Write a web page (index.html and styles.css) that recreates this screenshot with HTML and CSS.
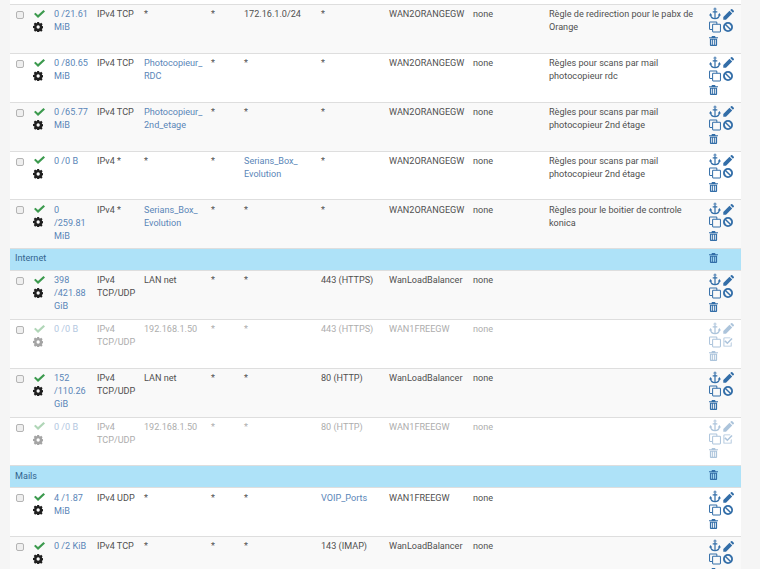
FILE: index.html
```html
<!DOCTYPE html>
<html lang="fr">
<head>
<meta charset="utf-8">
<title>Rules</title>
<link rel="stylesheet" href="styles.css">
</head>
<body>
<svg class="defs" width="0" height="0" aria-hidden="true">
<symbol id="i-check" viewBox="0 0 11 8"><path d="M0 4.100 1.500 2.700 4 5 9.500 0 11 1.400 4 8Z"/></symbol>
<symbol id="i-cog" viewBox="0 0 12 12"><path fill-rule="evenodd" d="M4.900 0h2.200l.3 1.600 1 .4 1.300-.9 1.600 1.600-.9 1.300.4 1 1.600.3v2.200l-1.600.3-.4 1 .9 1.300-1.600 1.600-1.300-.9-1 .4-.3 1.600H4.900l-.3-1.600-1-.4-1.300.9L.7 9.800l.9-1.300-.4-1L-.4 7.200V5l1.600-.3.400-1-.9-1.300L2.300.8l1.300.9 1-.4ZM6 4.100a2 2 0 1 0 0 4 2 2 0 0 0 0-4Z" transform="translate(.2 -.1)"/></symbol>
<symbol id="i-anchor" viewBox="0 0 13 13"><g fill="none" stroke="currentColor"><circle cx="6.500" cy="1.700" r="1.100" stroke-width="1"/><path d="M6.500 3V12.300M4 4.800H9" stroke-width="1.300"/><path d="M1.700 8C2 10.800 4 12 6.500 12S11 10.800 11.300 8" stroke-width="1.300"/></g><path d="M0 8.800 1.700 6 3.500 8.800ZM9.500 8.800 11.300 6 13 8.800Z"/></symbol>
<symbol id="i-pencil" viewBox="0 0 11 11"><path d="M0.300 8 6.500 1.800 9.200 4.500 3 10.700H0.300ZM7.200 1.100 8.200.200a.8.8 0 0 1 1.100 0L10.800 1.700a.8.800 0 0 1 0 1.100L9.900 3.800Z"/></symbol>
<symbol id="i-copy" viewBox="0 0 13 12"><g fill="none" stroke="currentColor" stroke-width="1.100"><path d="M8.500 3V1.100A.6.6 0 0 0 7.900.6H1.200A.6.6 0 0 0 .6 1.100V8A.6.6 0 0 0 1.200 8.600H3.500"/><rect x="3.900" y="3.100" width="8.500" height="8.300" rx=".7"/></g></symbol>
<symbol id="i-ban" viewBox="0 0 11 11"><path fill-rule="evenodd" d="M5.500 0a5.500 5.500 0 1 1 0 11 5.500 5.500 0 0 1 0-11ZM2.400 3.500A3.800 3.800 0 0 0 7.500 8.600ZM3.500 2.400 8.600 7.500A3.800 3.800 0 0 0 3.500 2.400Z"/></symbol>
<symbol id="i-trash" viewBox="0 0 10 11"><path fill-rule="evenodd" d="M3.300 0H6.700L7.300 1.300H10V2.400H0V1.300H2.700ZM1 3H9V10A1 1 0 0 1 8 11H2A1 1 0 0 1 1 10ZM2.500 4.200V9.800H3.500V4.200ZM4.500 4.200V9.800H5.500V4.200ZM6.500 4.200V9.800H7.500V4.200Z"/></symbol>
<symbol id="i-checksq" viewBox="0 0 11 11"><path fill-rule="evenodd" d="M1.500 0.500H8V1.500H1.500V9.500H8.500V6.500L9.500 5.500V10.500H.5V1.500A1 1 0 0 1 1.500 .5ZM2.800 3.700 4.800 5.700 9.300 1 10.500 2.200 4.800 8 1.600 4.900Z"/></symbol>
</svg>
<div class="panel">
<table class="rules">
<colgroup>
<col class="c-box"><col class="c-st"><col class="c-states"><col class="c-proto"><col class="c-src"><col class="c-sport"><col class="c-dst"><col class="c-dport"><col class="c-gw"><col class="c-q"><col class="c-sched"><col class="c-desc"><col class="c-act">
</colgroup>
<tbody>
<tr class="alt">
<td><span class="box"></span></td><td><svg class="ic check"><use href="#i-check"/></svg><svg class="ic cog"><use href="#i-cog"/></svg></td>
<td><a>0 /21.61 MiB</a></td><td>IPv4 TCP</td><td>*</td><td>*</td><td>172.16.1.0/24</td><td>*</td><td>WAN2ORANGEGW</td><td>none</td><td></td><td>Règle de redirection pour le pabx de Orange</td>
<td class="acts"><div class="tools"><svg class="ic anchor"><use href="#i-anchor"/></svg><svg class="ic pencil"><use href="#i-pencil"/></svg><svg class="ic copy"><use href="#i-copy"/></svg><svg class="ic ban"><use href="#i-ban"/></svg><svg class="ic trash"><use href="#i-trash"/></svg></div></td>
</tr>
<tr>
<td><span class="box"></span></td><td><svg class="ic check"><use href="#i-check"/></svg><svg class="ic cog"><use href="#i-cog"/></svg></td>
<td><a>0 /80.65 MiB</a></td><td>IPv4 TCP</td><td><a>Photocopieur_<br>RDC</a></td><td>*</td><td>*</td><td>*</td><td>WAN2ORANGEGW</td><td>none</td><td></td><td>Règles pour scans par mail photocopieur rdc</td>
<td class="acts"><div class="tools"><svg class="ic anchor"><use href="#i-anchor"/></svg><svg class="ic pencil"><use href="#i-pencil"/></svg><svg class="ic copy"><use href="#i-copy"/></svg><svg class="ic ban"><use href="#i-ban"/></svg><svg class="ic trash"><use href="#i-trash"/></svg></div></td>
</tr>
<tr class="alt">
<td><span class="box"></span></td><td><svg class="ic check"><use href="#i-check"/></svg><svg class="ic cog"><use href="#i-cog"/></svg></td>
<td><a>0 /65.77 MiB</a></td><td>IPv4 TCP</td><td><a>Photocopieur_<br>2nd_etage</a></td><td>*</td><td>*</td><td>*</td><td>WAN2ORANGEGW</td><td>none</td><td></td><td>Règles pour scans par mail photocopieur 2nd étage</td>
<td class="acts"><div class="tools"><svg class="ic anchor"><use href="#i-anchor"/></svg><svg class="ic pencil"><use href="#i-pencil"/></svg><svg class="ic copy"><use href="#i-copy"/></svg><svg class="ic ban"><use href="#i-ban"/></svg><svg class="ic trash"><use href="#i-trash"/></svg></div></td>
</tr>
<tr>
<td><span class="box"></span></td><td><svg class="ic check"><use href="#i-check"/></svg><svg class="ic cog"><use href="#i-cog"/></svg></td>
<td><a>0 /0 B</a></td><td>IPv4 *</td><td>*</td><td>*</td><td><a>Serians_Box_<br>Evolution</a></td><td>*</td><td>WAN2ORANGEGW</td><td>none</td><td></td><td>Règles pour scans par mail photocopieur 2nd étage</td>
<td class="acts"><div class="tools"><svg class="ic anchor"><use href="#i-anchor"/></svg><svg class="ic pencil"><use href="#i-pencil"/></svg><svg class="ic copy"><use href="#i-copy"/></svg><svg class="ic ban"><use href="#i-ban"/></svg><svg class="ic trash"><use href="#i-trash"/></svg></div></td>
</tr>
<tr class="alt">
<td><span class="box"></span></td><td><svg class="ic check"><use href="#i-check"/></svg><svg class="ic cog"><use href="#i-cog"/></svg></td>
<td><a>0<br>/259.81<br>MiB</a></td><td>IPv4 *</td><td><a>Serians_Box_<br>Evolution</a></td><td>*</td><td>*</td><td>*</td><td>WAN2ORANGEGW</td><td>none</td><td></td><td>Règles pour le boitier de controle konica</td>
<td class="acts"><div class="tools"><svg class="ic anchor"><use href="#i-anchor"/></svg><svg class="ic pencil"><use href="#i-pencil"/></svg><svg class="ic copy"><use href="#i-copy"/></svg><svg class="ic ban"><use href="#i-ban"/></svg><svg class="ic trash"><use href="#i-trash"/></svg></div></td>
</tr>
<tr class="sep">
<td colspan="12">Internet</td><td class="acts"><div class="tools"><svg class="ic trash"><use href="#i-trash"/></svg></div></td>
</tr>
<tr class="alt">
<td><span class="box"></span></td><td><svg class="ic check"><use href="#i-check"/></svg><svg class="ic cog"><use href="#i-cog"/></svg></td>
<td><a>398<br>/421.88<br>GiB</a></td><td>IPv4 TCP/UDP</td><td>LAN net</td><td>*</td><td>*</td><td>443 (HTTPS)</td><td>WanLoadBalancer</td><td>none</td><td></td><td></td>
<td class="acts"><div class="tools"><svg class="ic anchor"><use href="#i-anchor"/></svg><svg class="ic pencil"><use href="#i-pencil"/></svg><svg class="ic copy"><use href="#i-copy"/></svg><svg class="ic ban"><use href="#i-ban"/></svg><svg class="ic trash"><use href="#i-trash"/></svg></div></td>
</tr>
<tr class="off">
<td><span class="box"></span></td><td><svg class="ic check"><use href="#i-check"/></svg><svg class="ic cog"><use href="#i-cog"/></svg></td>
<td><a>0 /0 B</a></td><td>IPv4 TCP/UDP</td><td>192.168.1.50</td><td>*</td><td>*</td><td>443 (HTTPS)</td><td>WAN1FREEGW</td><td>none</td><td></td><td></td>
<td class="acts"><div class="tools"><svg class="ic anchor"><use href="#i-anchor"/></svg><svg class="ic pencil"><use href="#i-pencil"/></svg><svg class="ic copy"><use href="#i-copy"/></svg><svg class="ic ban"><use href="#i-checksq"/></svg><svg class="ic trash"><use href="#i-trash"/></svg></div></td>
</tr>
<tr class="alt">
<td><span class="box"></span></td><td><svg class="ic check"><use href="#i-check"/></svg><svg class="ic cog"><use href="#i-cog"/></svg></td>
<td><a>152<br>/110.26<br>GiB</a></td><td>IPv4 TCP/UDP</td><td>LAN net</td><td>*</td><td>*</td><td>80 (HTTP)</td><td>WanLoadBalancer</td><td>none</td><td></td><td></td>
<td class="acts"><div class="tools"><svg class="ic anchor"><use href="#i-anchor"/></svg><svg class="ic pencil"><use href="#i-pencil"/></svg><svg class="ic copy"><use href="#i-copy"/></svg><svg class="ic ban"><use href="#i-ban"/></svg><svg class="ic trash"><use href="#i-trash"/></svg></div></td>
</tr>
<tr class="off">
<td><span class="box"></span></td><td><svg class="ic check"><use href="#i-check"/></svg><svg class="ic cog"><use href="#i-cog"/></svg></td>
<td><a>0 /0 B</a></td><td>IPv4 TCP/UDP</td><td>192.168.1.50</td><td>*</td><td>*</td><td>80 (HTTP)</td><td>WAN1FREEGW</td><td>none</td><td></td><td></td>
<td class="acts"><div class="tools"><svg class="ic anchor"><use href="#i-anchor"/></svg><svg class="ic pencil"><use href="#i-pencil"/></svg><svg class="ic copy"><use href="#i-copy"/></svg><svg class="ic ban"><use href="#i-checksq"/></svg><svg class="ic trash"><use href="#i-trash"/></svg></div></td>
</tr>
<tr class="sep">
<td colspan="12">Mails</td><td class="acts"><div class="tools"><svg class="ic trash"><use href="#i-trash"/></svg></div></td>
</tr>
<tr>
<td><span class="box"></span></td><td><svg class="ic check"><use href="#i-check"/></svg><svg class="ic cog"><use href="#i-cog"/></svg></td>
<td><a>4 /1.87 MiB</a></td><td>IPv4 UDP</td><td>*</td><td>*</td><td>*</td><td><a>VOIP_Ports</a></td><td>WAN1FREEGW</td><td>none</td><td></td><td></td>
<td class="acts"><div class="tools"><svg class="ic anchor"><use href="#i-anchor"/></svg><svg class="ic pencil"><use href="#i-pencil"/></svg><svg class="ic copy"><use href="#i-copy"/></svg><svg class="ic ban"><use href="#i-ban"/></svg><svg class="ic trash"><use href="#i-trash"/></svg></div></td>
</tr>
<tr class="alt">
<td><span class="box"></span></td><td><svg class="ic check"><use href="#i-check"/></svg><svg class="ic cog"><use href="#i-cog"/></svg></td>
<td><a>0 /2 KiB</a></td><td>IPv4 TCP</td><td>*</td><td>*</td><td>*</td><td>143 (IMAP)</td><td>WanLoadBalancer</td><td>none</td><td></td><td></td>
<td class="acts"><div class="tools"><svg class="ic anchor"><use href="#i-anchor"/></svg><svg class="ic pencil"><use href="#i-pencil"/></svg><svg class="ic copy"><use href="#i-copy"/></svg><svg class="ic ban"><use href="#i-ban"/></svg><svg class="ic trash"><use href="#i-trash"/></svg></div></td>
</tr>
</tbody>
</table>
</div>
</body>
</html>
```
FILE: styles.css
```css
html, body {
  margin: 0;
  padding: 0;
  height: 569px;
  overflow: hidden;
  background: #f5f5f5;
}
.defs {
  position: absolute;
}
.panel {
  margin-left: 10px;
  width: 731px;
  height: 569px;
  overflow: hidden;
  background: #fff;
  padding-top: 4.3px;
  box-sizing: border-box;
}
.rules {
  width: 731px;
  table-layout: fixed;
  border-collapse: separate;
  border-spacing: 0;
  font-family: Roboto, "Liberation Sans", sans-serif;
  font-size: 9.1px;
  line-height: 13px;
  color: #505050;
}
.c-box { width: 20px; }
.c-st { width: 20px; }
.c-states { width: 43px; }
.c-proto { width: 47px; }
.c-src { width: 67px; }
.c-sport { width: 33px; }
.c-dst { width: 77px; }
.c-dport { width: 68px; }
.c-gw { width: 84px; }
.c-q { width: 40px; }
.c-sched { width: 36px; }
.c-desc { width: 163px; }
.c-act { width: 33px; }
.rules tr {
  height: 48.8px;
}
.rules td {
  vertical-align: top;
  padding: 3.2px 0 0 4px;
  border-top: 1px solid #dedede;
  overflow: hidden;
  box-sizing: border-box;
}
.rules td:first-child {
  padding: 2.5px 0 0;
}
.rules td:nth-child(2) {
  padding: 2.5px 0 0;
}
.rules td:nth-child(12) {
  padding-right: 12px;
}
.alt td {
  background: #f9f9f9;
}
.rules a {
  color: #5a86b8;
}
.box {
  display: block;
  box-sizing: border-box;
  width: 8px;
  height: 8px;
  margin: 3.5px 0 0 6px;
  background: #efefef;
  border: 1px solid #b4b4b4;
  border-radius: 2px;
}
.ic {
  display: block;
  color: #336ea8;
  fill: currentColor;
}
.check {
  width: 11px;
  height: 8px;
  margin: 2.2px 0 0 3.5px;
  color: #3c9a4e;
}
.cog {
  width: 10px;
  height: 10px;
  margin: 4.2px 0 0 3px;
  color: #1f1f1f;
}
.rules td.acts {
  padding: 1.8px 0 0 1px;
}
.tools {
  display: grid;
  grid-template-columns: 13px 12px;
  column-gap: 1px;
  row-gap: 1px;
  align-items: center;
  justify-items: start;
}
.anchor {
  width: 12px;
  height: 13px;
}
.copy {
  width: 12px;
  height: 12px;
}
.pencil {
  width: 11px;
  height: 11px;
  margin-top: 1px;
}
.ban {
  width: 10px;
  height: 10px;
}
.trash {
  width: 9px;
  height: 10px;
  margin-top: 2px;
}
.rules tr.sep {
  height: 22px;
}
.rules .sep td {
  background: #aee2f8;
  color: #33658f;
  padding: 3.2px 0 0 5px;
}
.rules .sep td.acts {
  padding: 2px 0 0 1px;
}
.off td {
  color: #adadad;
}
.off a {
  color: #b4c8df;
}
.off .ic {
  opacity: 0.4;
}
```
